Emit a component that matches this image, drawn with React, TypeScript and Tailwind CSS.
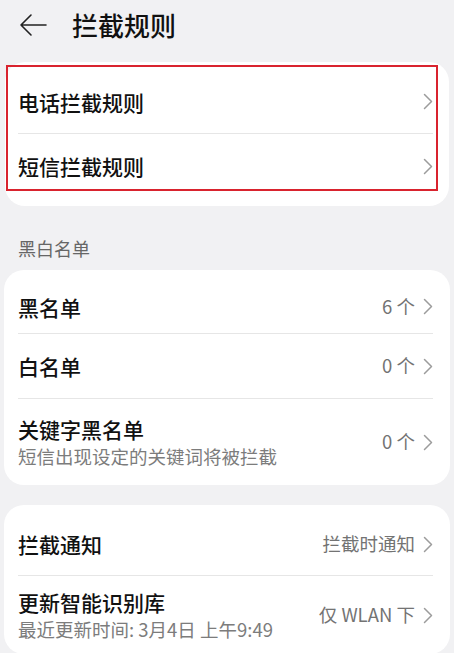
type RowProps = {
  title: string;
  sub?: string;
  value?: string;
  h: string;
  last?: boolean;
};

const Chevron = () => (
  <svg width="10" height="17" viewBox="0 0 10 17" fill="none" stroke="#9c9c9c" strokeWidth="1.5" strokeLinecap="round" strokeLinejoin="round" className="shrink-0">
    <path d="M1.5 1.5 8.5 8.5 1.5 15.5" />
  </svg>
);

const Row = ({ title, sub, value, h, last }: RowProps) => {
  return (
    <div className={`flex items-center ${h} ${last ? "" : "border-b border-[#e6e6e6]"}`}>
      <div className="flex flex-1 flex-col">
        <span className="text-[21px] leading-[28px] font-medium text-[#111]">{title}</span>
        {sub && <span className="text-[18.5px] leading-[26px] text-[#7c7c7c]">{sub}</span>}
      </div>
      {value && <span className="mr-[8px] text-[18.5px] text-[#737373]">{value}</span>}
      <Chevron />
    </div>
  );
};

export default function App() {
  return (
    <div
      className="h-[653px] w-[454px] overflow-hidden bg-[#f1f1f3]"
      style={{ fontFamily: '"Noto Sans CJK SC", "Noto Sans", sans-serif' }}
    >
      <div className="flex h-[50px] items-center pl-[19px]">
        <svg width="28" height="24" viewBox="0 0 28 24" fill="none" stroke="#222" strokeWidth="1.6" strokeLinecap="round" strokeLinejoin="round">
          <path d="M27 12H2M12 2 2 12l10 10" />
        </svg>
        <h1 className="ml-[25px] text-[26px] font-medium leading-none text-[#111]">拦截规则</h1>
      </div>

      {/* 电话/短信 */}
      <div className="relative mx-[5px] mt-3 rounded-[20px] bg-white py-2 pl-[13px] pr-[16px]">
        <Row title="电话拦截规则" h="h-16" />
        <Row title="短信拦截规则" h="h-16" last />
        <div className="pointer-events-none absolute left-[1px] right-[11px] top-[3px] h-[126px] border-2 border-[#d9232e]" />
      </div>

      <div className="px-[18px] pt-[29px] pb-[9px] text-[18px] leading-[26px] text-[#666]">黑白名单</div>

      <div className="mx-[4px] rounded-[20px] bg-white pl-[14px] pr-[17px] pt-[10px]">
        <Row title="黑名单" value="6 个" h="h-[54px]" />
        <Row title="白名单" value="0 个" h="h-[65px]" />
        <Row title="关键字黑名单" sub="短信出现设定的关键词将被拦截" value="0 个" h="h-[86px]" last />
      </div>

      <div className="mx-[4px] mt-[20px] rounded-[20px] bg-white pl-[14px] pr-[17px] pt-[8px]">
        <Row title="拦截通知" value="拦截时通知" h="h-[63px]" />
        <Row title="更新智能识别库" sub="最近更新时间: 3月4日 上午9:49" value="仅 WLAN 下" h="h-[78px]" last />
      </div>
    </div>
  );
}
